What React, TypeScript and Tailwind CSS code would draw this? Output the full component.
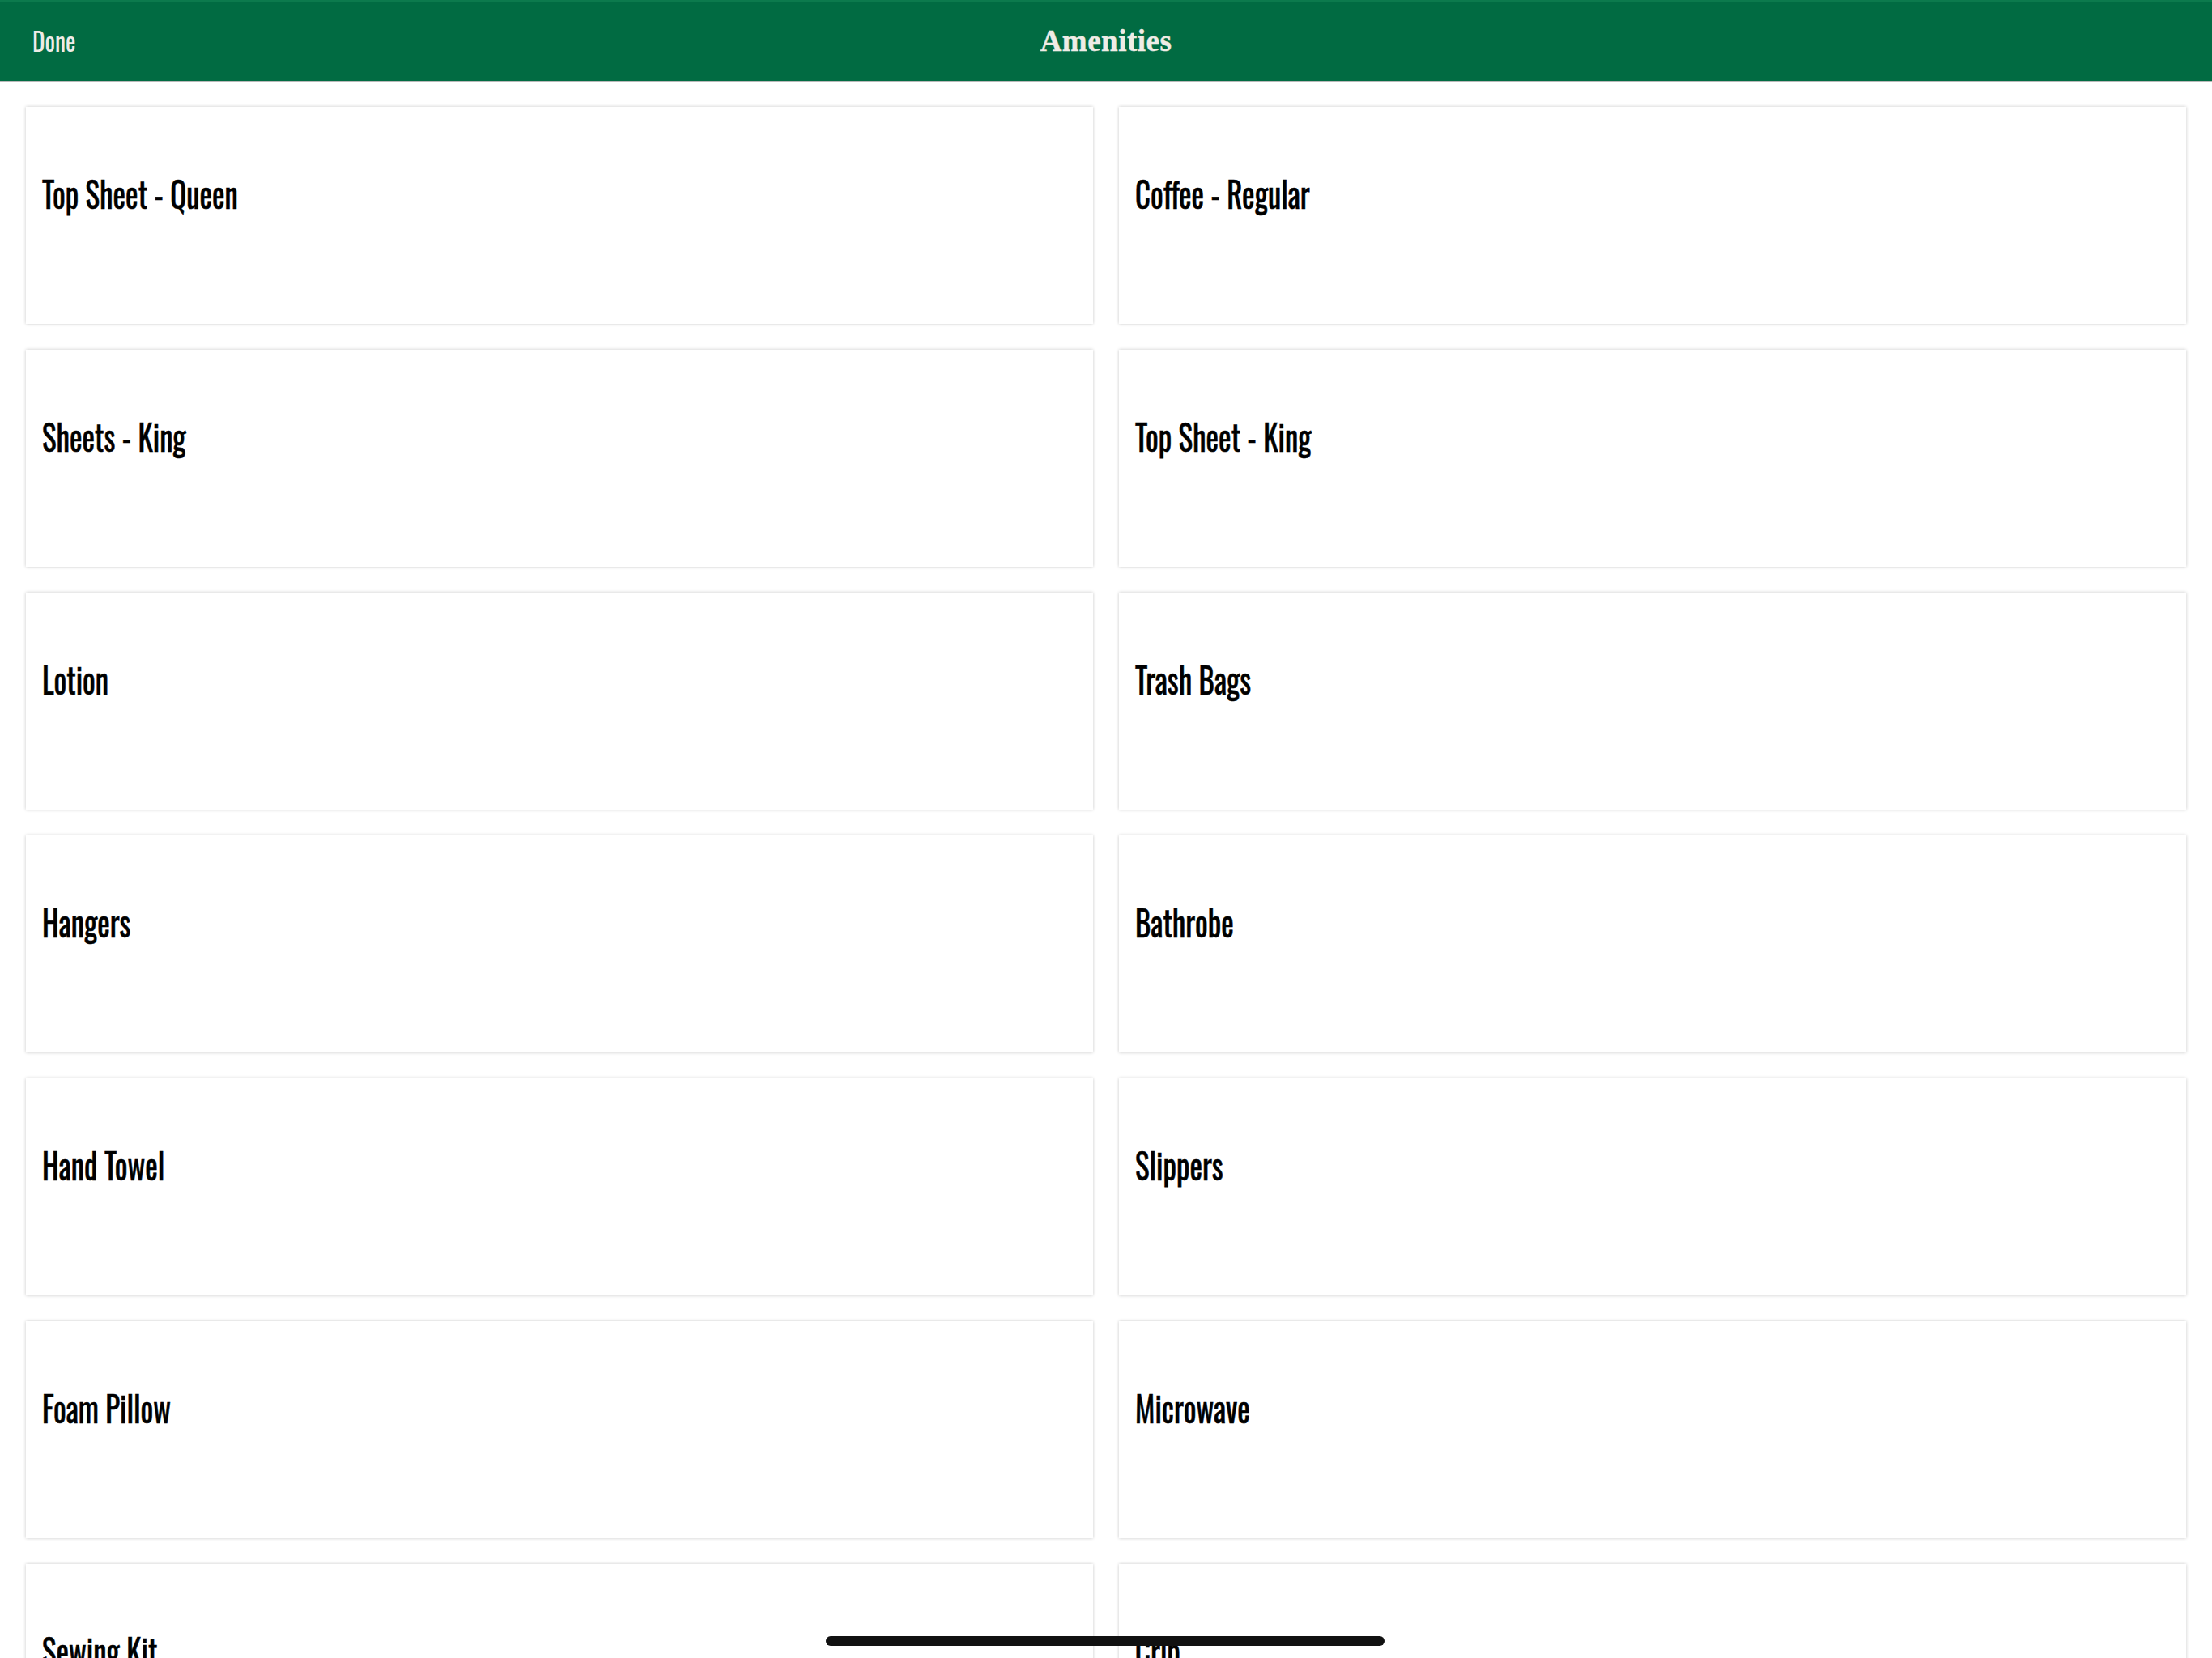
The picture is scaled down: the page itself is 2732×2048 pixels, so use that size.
const amenities = [
  'Top Sheet - Queen',
  'Coffee - Regular',
  'Sheets - King',
  'Top Sheet - King',
  'Lotion',
  'Trash Bags',
  'Hangers',
  'Bathrobe',
  'Hand Towel',
  'Slippers',
  'Foam Pillow',
  'Microwave',
  'Sewing Kit',
  'Crib',
  'Iron',
  'Hair Dryer',
];

const condensed = '[font-family:"Oswald","Liberation_Sans_Narrow","DejaVu_Sans_Condensed",sans-serif]';

function AmenityCard({ name }: { name: string }) {
  return (
    <button className="flex h-[268px] items-start bg-white pl-[20px] pt-[81px] text-left shadow-[0_0_4px_rgba(0,0,0,0.22)]">
      <span
        className={`${condensed} origin-left scale-x-[0.84] text-[44px] leading-[52px] text-black [-webkit-text-stroke:0.6px_black]`}
      >
        {name}
      </span>
    </button>
  );
}

export default function App() {
  return (
    <div className="relative h-[2048px] w-[2732px] overflow-hidden bg-white">
      <header className="relative flex h-[101px] items-center justify-center border-t-2 border-b border-t-[#0c7a4d] border-b-[#b9b9b9] bg-[#016b42]">
        <button className={`${condensed} absolute left-[40px] top-[27px] scale-x-[0.92] origin-left text-[32px] leading-[42px] text-[#efece6]`}>
          Done
        </button>
        <h1 className='[font-family:"Liberation_Serif",serif] text-[37px] font-bold tracking-[0.5px] text-[#efece6] [-webkit-text-stroke:0.4px_#efece6]'>
          Amenities
        </h1>
      </header>
      <main className="grid grid-cols-2 gap-x-[32px] gap-y-[32px] px-[32px] pt-[31px]">
        {amenities.map((item) => (
          <AmenityCard key={item} name={item} />
        ))}
      </main>
      <div className="absolute left-[1020px] top-[2021px] h-[12px] w-[690px] rounded-full bg-[#111]" />
    </div>
  );
}
